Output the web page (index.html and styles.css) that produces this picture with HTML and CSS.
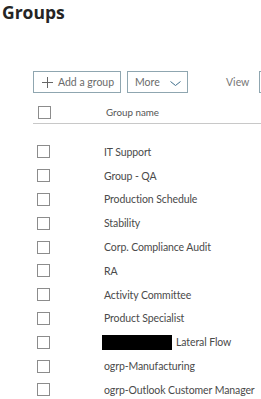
FILE: index.html
```html
<!DOCTYPE html>
<html lang="en">
<head>
  <meta charset="UTF-8">
  <title>Groups</title>
  <link rel="stylesheet" href="styles.css">
</head>
<body>

  <h1 class="title">Groups</h1>

  <div class="content">
    <div class="toolbar">
      <button class="btn btn-add">
        <svg class="plus" width="11" height="11" viewBox="0 0 11 11"><path d="M5.5 0v11M0 5.5h11" stroke="#666" stroke-width="1"/></svg>
        Add a group
      </button>
      <button class="btn btn-more">
        More
        <svg class="chev" width="11" height="5" viewBox="0 0 11 5"><path d="M0.5 0.5l5 4 5-4" fill="none" stroke="#3f6f8c" stroke-width="1"/></svg>
      </button>
      <span class="view-label">View</span>
      <span class="view-box"></span>
    </div>

    <div class="list-head">
      <span class="check"></span>
      <span class="head-name">Group name</span>
    </div>

    <ul class="list">
      <li><span class="check"></span><span class="name">IT Support</span></li>
      <li><span class="check"></span><span class="name">Group - QA</span></li>
      <li><span class="check"></span><span class="name">Production Schedule</span></li>
      <li><span class="check"></span><span class="name">Stability</span></li>
      <li><span class="check"></span><span class="name">Corp. Compliance Audit</span></li>
      <li><span class="check"></span><span class="name">RA</span></li>
      <li><span class="check"></span><span class="name">Activity Committee</span></li>
      <li><span class="check"></span><span class="name">Product Specialist</span></li>
      <li><span class="check"></span><span class="name"><span class="redacted"></span>Lateral Flow</span></li>
      <li><span class="check"></span><span class="name">ogrp-Manufacturing</span></li>
      <li><span class="check"></span><span class="name">ogrp-Outlook Customer Manager</span></li>
    </ul>
  </div>

</body>
</html>
```

FILE: styles.css
```css
body {
  margin: 0;
  background: #fff;
  font-family: Lato, "Noto Sans", sans-serif;
  color: #4a4a4a;
  overflow: hidden;
}
.title {
  margin: 0;
  padding: 0 0 0 2px;
  font-family: "Open Sans", sans-serif;
  font-size: 17.5px;
  line-height: 24px;
  font-weight: 700;
  color: #252525;
}
.content {
  padding-left: 33px;
}
.toolbar {
  display: flex;
  align-items: center;
  margin-top: 47px;
  height: 22px;
  white-space: nowrap;
}
.toolbar > * {
  flex-shrink: 0;
}
.btn {
  display: flex;
  align-items: center;
  height: 22px;
  box-sizing: border-box;
  border: 1px solid #8fa6b0;
  background: #fff;
  font-family: inherit;
  font-size: 10.5px;
  color: #6a6a6a;
  padding: 0;
  margin: 0;
}
.btn-add {
  width: 88px;
  padding-left: 8px;
  gap: 5px;
}
.btn-more {
  width: 61px;
  margin-left: 6px;
  padding-left: 7px;
  gap: 10px;
}
.chev {
  margin-top: 3px;
}
.view-label {
  margin-left: 38px;
  font-size: 10.5px;
  color: #777;
}
.view-box {
  margin-left: 10px;
  width: 40px;
  height: 22px;
  box-sizing: border-box;
  border: 1px solid #8fa6b0;
}
.check {
  display: inline-block;
  width: 13px;
  height: 13px;
  box-sizing: border-box;
  border: 1px solid #8c8c8c;
  flex-shrink: 0;
}
.list-head {
  display: flex;
  align-items: center;
  height: 22px;
  margin-top: 8px;
  padding-left: 5px;
  border-bottom: 1px solid #c8c8c8;
  font-size: 9.8px;
  color: #555;
}
.head-name {
  margin-left: 55px;
}
.list {
  list-style: none;
  margin: 16px 0 0;
  padding: 0;
}
.list li {
  display: flex;
  align-items: center;
  height: 23.8px;
  padding-left: 4px;
  font-size: 10.5px;
  letter-spacing: -0.1px;
}
.name {
  margin-left: 54px;
  display: flex;
  align-items: center;
  white-space: nowrap;
}
.redacted {
  display: inline-block;
  width: 70px;
  height: 15px;
  background: #000;
  margin-right: 4px;
  margin-left: -2px;
}
```
